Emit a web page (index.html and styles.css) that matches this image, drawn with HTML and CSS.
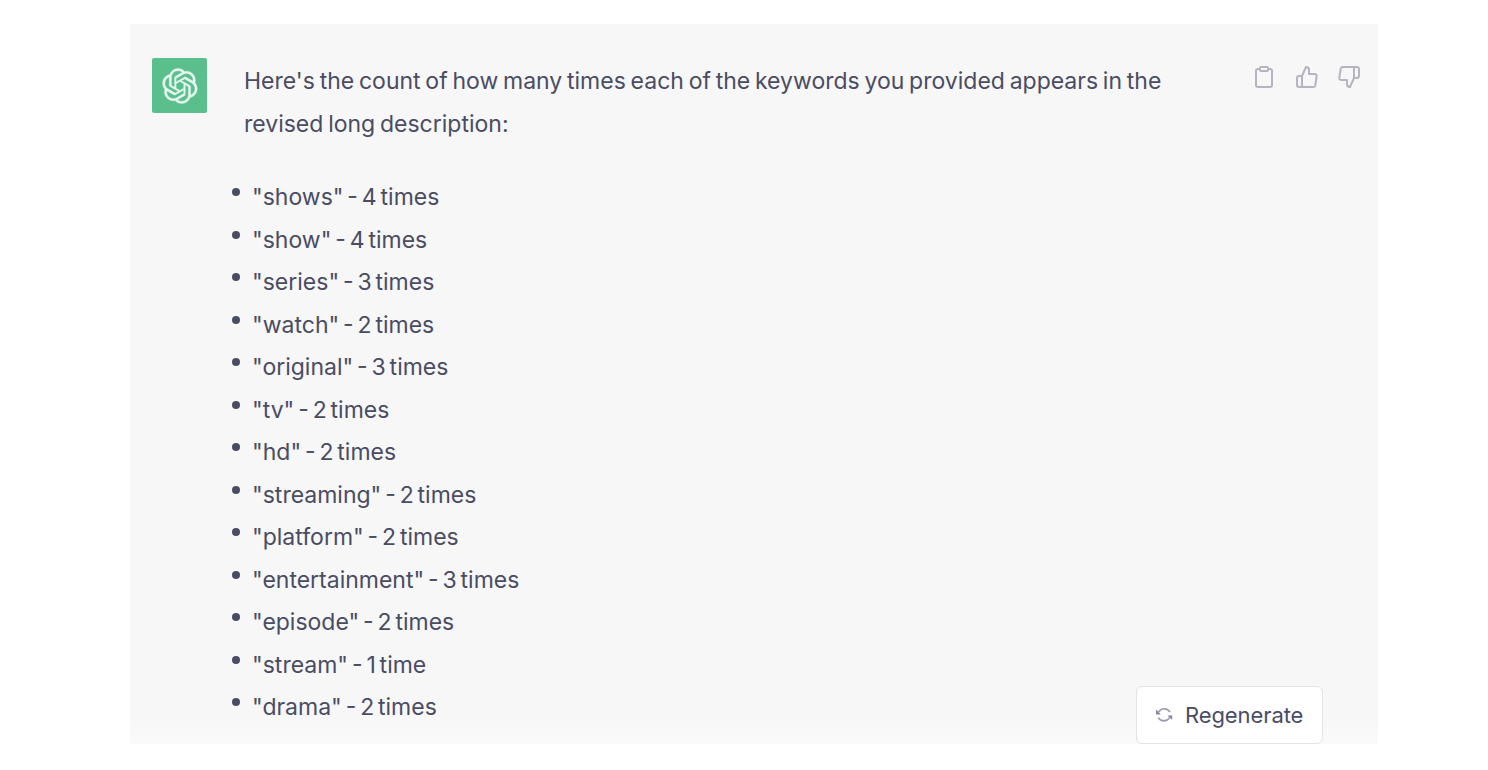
FILE: index.html
```html
<!DOCTYPE html>
<html lang="en">
<head>
  <meta charset="UTF-8">
  <title>Keyword Count</title>
  <link rel="stylesheet" href="styles.css">
</head>
<body>

  <main class="message">
    <!-- Avatar -->
    <div class="avatar">
      <svg class="logo" viewBox="0 0 41 41" fill="currentColor">
        <path d="M37.5324 16.8707C37.9808 15.5241 38.1363 14.0974 37.9886 12.6859C37.8409 11.2744 37.3934 9.91076 36.676 8.68622C35.6126 6.83404 33.9882 5.3676 32.0373 4.4985C30.0864 3.62941 27.9098 3.40259 25.8215 3.85078C24.8796 2.7893 23.7219 1.94125 22.4257 1.36341C21.1295 0.785575 19.7249 0.491269 18.3058 0.500197C16.1708 0.495044 14.0893 1.16803 12.3614 2.42214C10.6335 3.67624 9.34853 5.44666 8.6917 7.47815C7.30085 7.76286 5.98686 8.3414 4.8377 9.17505C3.68854 10.0087 2.73073 11.0782 2.02839 12.312C0.956464 14.1591 0.498905 16.2988 0.721698 18.4228C0.944492 20.5467 1.83612 22.5449 3.268 24.1293C2.81966 25.4759 2.66413 26.9026 2.81182 28.3141C2.95951 29.7256 3.40701 31.0892 4.12437 32.3138C5.18791 34.1659 6.8123 35.6322 8.76321 36.5013C10.7141 37.3704 12.8907 37.5973 14.9789 37.1492C15.9208 38.2107 17.0786 39.0587 18.3747 39.6366C19.6709 40.2144 21.0755 40.5087 22.4946 40.4998C24.6307 40.5054 26.7133 39.8321 28.4418 38.5772C30.1704 37.3223 31.4556 35.5506 32.1119 33.5179C33.5027 33.2332 34.8167 32.6547 35.9659 31.821C37.115 30.9874 38.0728 29.9178 38.7752 28.684C39.8458 26.8371 40.3023 24.6979 40.0789 22.5748C39.8556 20.4517 38.9639 18.4544 37.5324 16.8707ZM22.4978 37.8849C20.7443 37.8874 19.0459 37.2733 17.6994 36.1501C17.7601 36.117 17.8666 36.0586 17.936 36.0161L25.9004 31.4156C26.1003 31.3019 26.2663 31.137 26.3813 30.9378C26.4964 30.7386 26.5563 30.5124 26.5549 30.2825V19.0542L29.9213 20.998C29.9389 21.0068 29.9541 21.0198 29.9656 21.0359C29.977 21.052 29.9842 21.0707 29.9867 21.0902V30.3889C29.9842 32.375 29.1946 34.2791 27.7909 35.6841C26.3872 37.0892 24.4838 37.8806 22.4978 37.8849ZM6.39227 31.0064C5.51397 29.4888 5.19742 27.7107 5.49804 25.9832C5.55718 26.0187 5.66048 26.0818 5.73461 26.1244L13.699 30.7248C13.8975 30.8408 14.1233 30.902 14.3532 30.902C14.583 30.902 14.8088 30.8408 15.0073 30.7248L24.731 25.1103V28.9979C24.7321 29.0177 24.7283 29.0376 24.7199 29.0556C24.7115 29.0736 24.6988 29.0893 24.6829 29.1012L16.6317 33.7497C14.9096 34.7416 12.8643 35.0097 10.9447 34.4954C9.02506 33.9811 7.38785 32.7263 6.39227 31.0064ZM4.29707 13.6194C5.17156 12.0998 6.55279 10.9364 8.19885 10.3327C8.19885 10.4013 8.19491 10.5228 8.19491 10.6071V19.808C8.19351 20.0378 8.25334 20.2638 8.36823 20.4629C8.48312 20.6619 8.64893 20.8267 8.84863 20.9404L18.5723 26.5542L15.206 28.4979C15.1894 28.5089 15.1703 28.5155 15.1505 28.5173C15.1307 28.5191 15.1107 28.516 15.0924 28.5082L7.04046 23.8557C5.32135 22.8601 4.06716 21.2235 3.55289 19.3046C3.03862 17.3858 3.30624 15.3413 4.29707 13.6194ZM31.955 20.0556L22.2312 14.4411L25.5976 12.4981C25.6142 12.4872 25.6333 12.4805 25.6531 12.4787C25.6729 12.4769 25.6928 12.4801 25.7111 12.4879L33.7631 17.1364C34.9967 17.849 36.0017 18.8982 36.6606 20.1613C37.3194 21.4244 37.6047 22.849 37.4832 24.2684C37.3617 25.6878 36.8382 27.0432 35.9743 28.1759C35.1103 29.3086 33.9415 30.1717 32.6047 30.6641C32.6047 30.5947 32.6047 30.4733 32.6047 30.3889V21.188C32.6066 20.9586 32.5474 20.7328 32.4332 20.5338C32.319 20.3348 32.154 20.1698 31.955 20.0556ZM35.3055 15.0128C35.2464 14.9765 35.1431 14.9142 35.069 14.8717L27.1045 10.2712C26.906 10.1554 26.6803 10.0943 26.4504 10.0943C26.2206 10.0943 25.9948 10.1554 25.7963 10.2712L16.0726 15.8858V11.9982C16.0715 11.9783 16.0753 11.9585 16.0837 11.9405C16.0921 11.9225 16.1048 11.9068 16.1207 11.8949L24.1719 7.25025C25.4053 6.53903 26.8158 6.19376 28.2383 6.25482C29.6608 6.31589 31.0364 6.78077 32.2044 7.59508C33.3723 8.40939 34.2842 9.53945 34.8334 10.8531C35.3826 12.1667 35.5464 13.6095 35.3055 15.0128ZM14.2424 21.9419L10.8752 19.9981C10.8576 19.9893 10.8423 19.9763 10.8309 19.9602C10.8195 19.9441 10.8122 19.9254 10.8098 19.9058V10.6071C10.8107 9.18295 11.2173 7.78848 11.9819 6.58696C12.7466 5.38544 13.8377 4.42659 15.1275 3.82264C16.4173 3.21869 17.8524 2.99464 19.2649 3.1767C20.6775 3.35876 22.0089 3.93941 23.1034 4.85067C23.0427 4.88379 22.937 4.94215 22.8668 4.98473L14.9024 9.58517C14.7025 9.69878 14.5366 9.86356 14.4215 10.0626C14.3065 10.2616 14.2466 10.4877 14.2479 10.7175L14.2424 21.9419ZM16.071 17.9991L20.4018 15.4978L24.7325 17.9975V22.9985L20.4018 25.4983L16.071 22.9985V17.9991Z"/>
      </svg>
    </div>

    <!-- Answer -->
    <div class="content">
      <p>Here's the count of how many times each of the keywords you provided appears in the<br>revised long description:</p>
      <ul>
        <li>"shows" - 4 times</li>
        <li>"show" - 4 times</li>
        <li>"series" - 3 times</li>
        <li>"watch" - 2 times</li>
        <li>"original" - 3 times</li>
        <li>"tv" - 2 times</li>
        <li>"hd" - 2 times</li>
        <li>"streaming" - 2 times</li>
        <li>"platform" - 2 times</li>
        <li>"entertainment" - 3 times</li>
        <li>"episode" - 2 times</li>
        <li>"stream" - 1 time</li>
        <li>"drama" - 2 times</li>
      </ul>
    </div>

    <!-- Copy and rating icons -->
    <div class="actions">
      <svg viewBox="0 0 24 24"><path d="M16 4h2a2 2 0 0 1 2 2v14a2 2 0 0 1-2 2H6a2 2 0 0 1-2-2V6a2 2 0 0 1 2-2h2"/><rect x="8" y="2" width="8" height="4" rx="1"/></svg>
      <svg viewBox="0 0 24 24"><path d="M14 9V5a3 3 0 0 0-3-3l-4 9v11h11.28a2 2 0 0 0 2-1.7l1.38-9a2 2 0 0 0-2-2.3zM7 22H4a2 2 0 0 1-2-2v-7a2 2 0 0 1 2-2h3"/></svg>
      <svg viewBox="0 0 24 24"><path d="M10 15v4a3 3 0 0 0 3 3l4-9V2H5.72a2 2 0 0 0-2 1.7l-1.38 9a2 2 0 0 0 2 2.3zm7-13h2.67A2.31 2.31 0 0 1 22 4v7a2.31 2.31 0 0 1-2.33 2H17"/></svg>
    </div>

    <button class="regenerate">
      <svg viewBox="0 0 18 18">
        <path d="M3.6 6A6.6 6.6 0 0 1 15 6.2M14.6 11.6A6.6 6.6 0 0 1 3.2 11.6"/>
        <path class="arrow" d="M1 3.6v4.8h4.8zM17.2 14V9.4h-4.8z"/>
      </svg>
      <span>Regenerate</span>
    </button>
  </main>

</body>
</html>
```

FILE: styles.css
```css
body {
  margin: 0;
  background: #fff;
  color: #4a4c63;
  font-family: Inter, "Liberation Sans", sans-serif;
}

.message {
  position: relative;
  display: flex;
  align-items: flex-start;
  box-sizing: border-box;
  width: 1248px;
  height: 720px;
  margin: 24px 0 0 130px;
  padding: 34px 17px 0 22px;
  background: linear-gradient(#f7f7f7 690px, #fafafa);
}

.avatar {
  display: flex;
  align-items: center;
  justify-content: center;
  width: 55px;
  height: 55px;
  border-radius: 2px;
  background: #5abf8c;
  color: #e6f7f0;
}

.logo {
  width: 36px;
  height: 36px;
  stroke: currentColor;
  stroke-width: 0.4;
}

.content {
  flex: 1;
  margin: 2px 0 0 37px;
  font-size: 23px;
  line-height: 42.5px;
  white-space: nowrap;
  word-spacing: -1.7px;
}

.content p {
  margin: 0 0 31px;
}

.content ul {
  margin: 0;
  padding: 0;
  list-style: none;
  word-spacing: -2.6px;
}

.content li {
  display: flex;
  margin-left: -12px;
}

.content li::before {
  content: "";
  width: 8px;
  height: 8px;
  margin: 12px 12px 0 0;
  border-radius: 50%;
  background: #4a4c63;
}

.actions {
  display: flex;
  gap: 18.5px;
  margin-top: 7px;
}

.actions svg {
  width: 24px;
  height: 24px;
  fill: none;
  stroke: #b4b5c0;
  stroke-width: 2;
  stroke-linecap: round;
  stroke-linejoin: round;
}

/* sits over the lower right corner of the message */
.regenerate {
  position: absolute;
  right: 55px;
  bottom: 0;
  display: flex;
  align-items: center;
  box-sizing: border-box;
  width: 187px;
  height: 58px;
  padding: 0 0 0 18px;
  border: 1px solid #e3e3e3;
  border-radius: 6px;
  background: #fff;
  color: #4a4c63;
  font: inherit;
  font-size: 22px;
  letter-spacing: -0.1px;
}

.regenerate svg {
  width: 18px;
  height: 18px;
  margin-right: 12px;
  fill: none;
  stroke: #9c9db0;
  stroke-width: 1.6;
}

.regenerate .arrow {
  fill: #8586a0;
  stroke: none;
}
```
